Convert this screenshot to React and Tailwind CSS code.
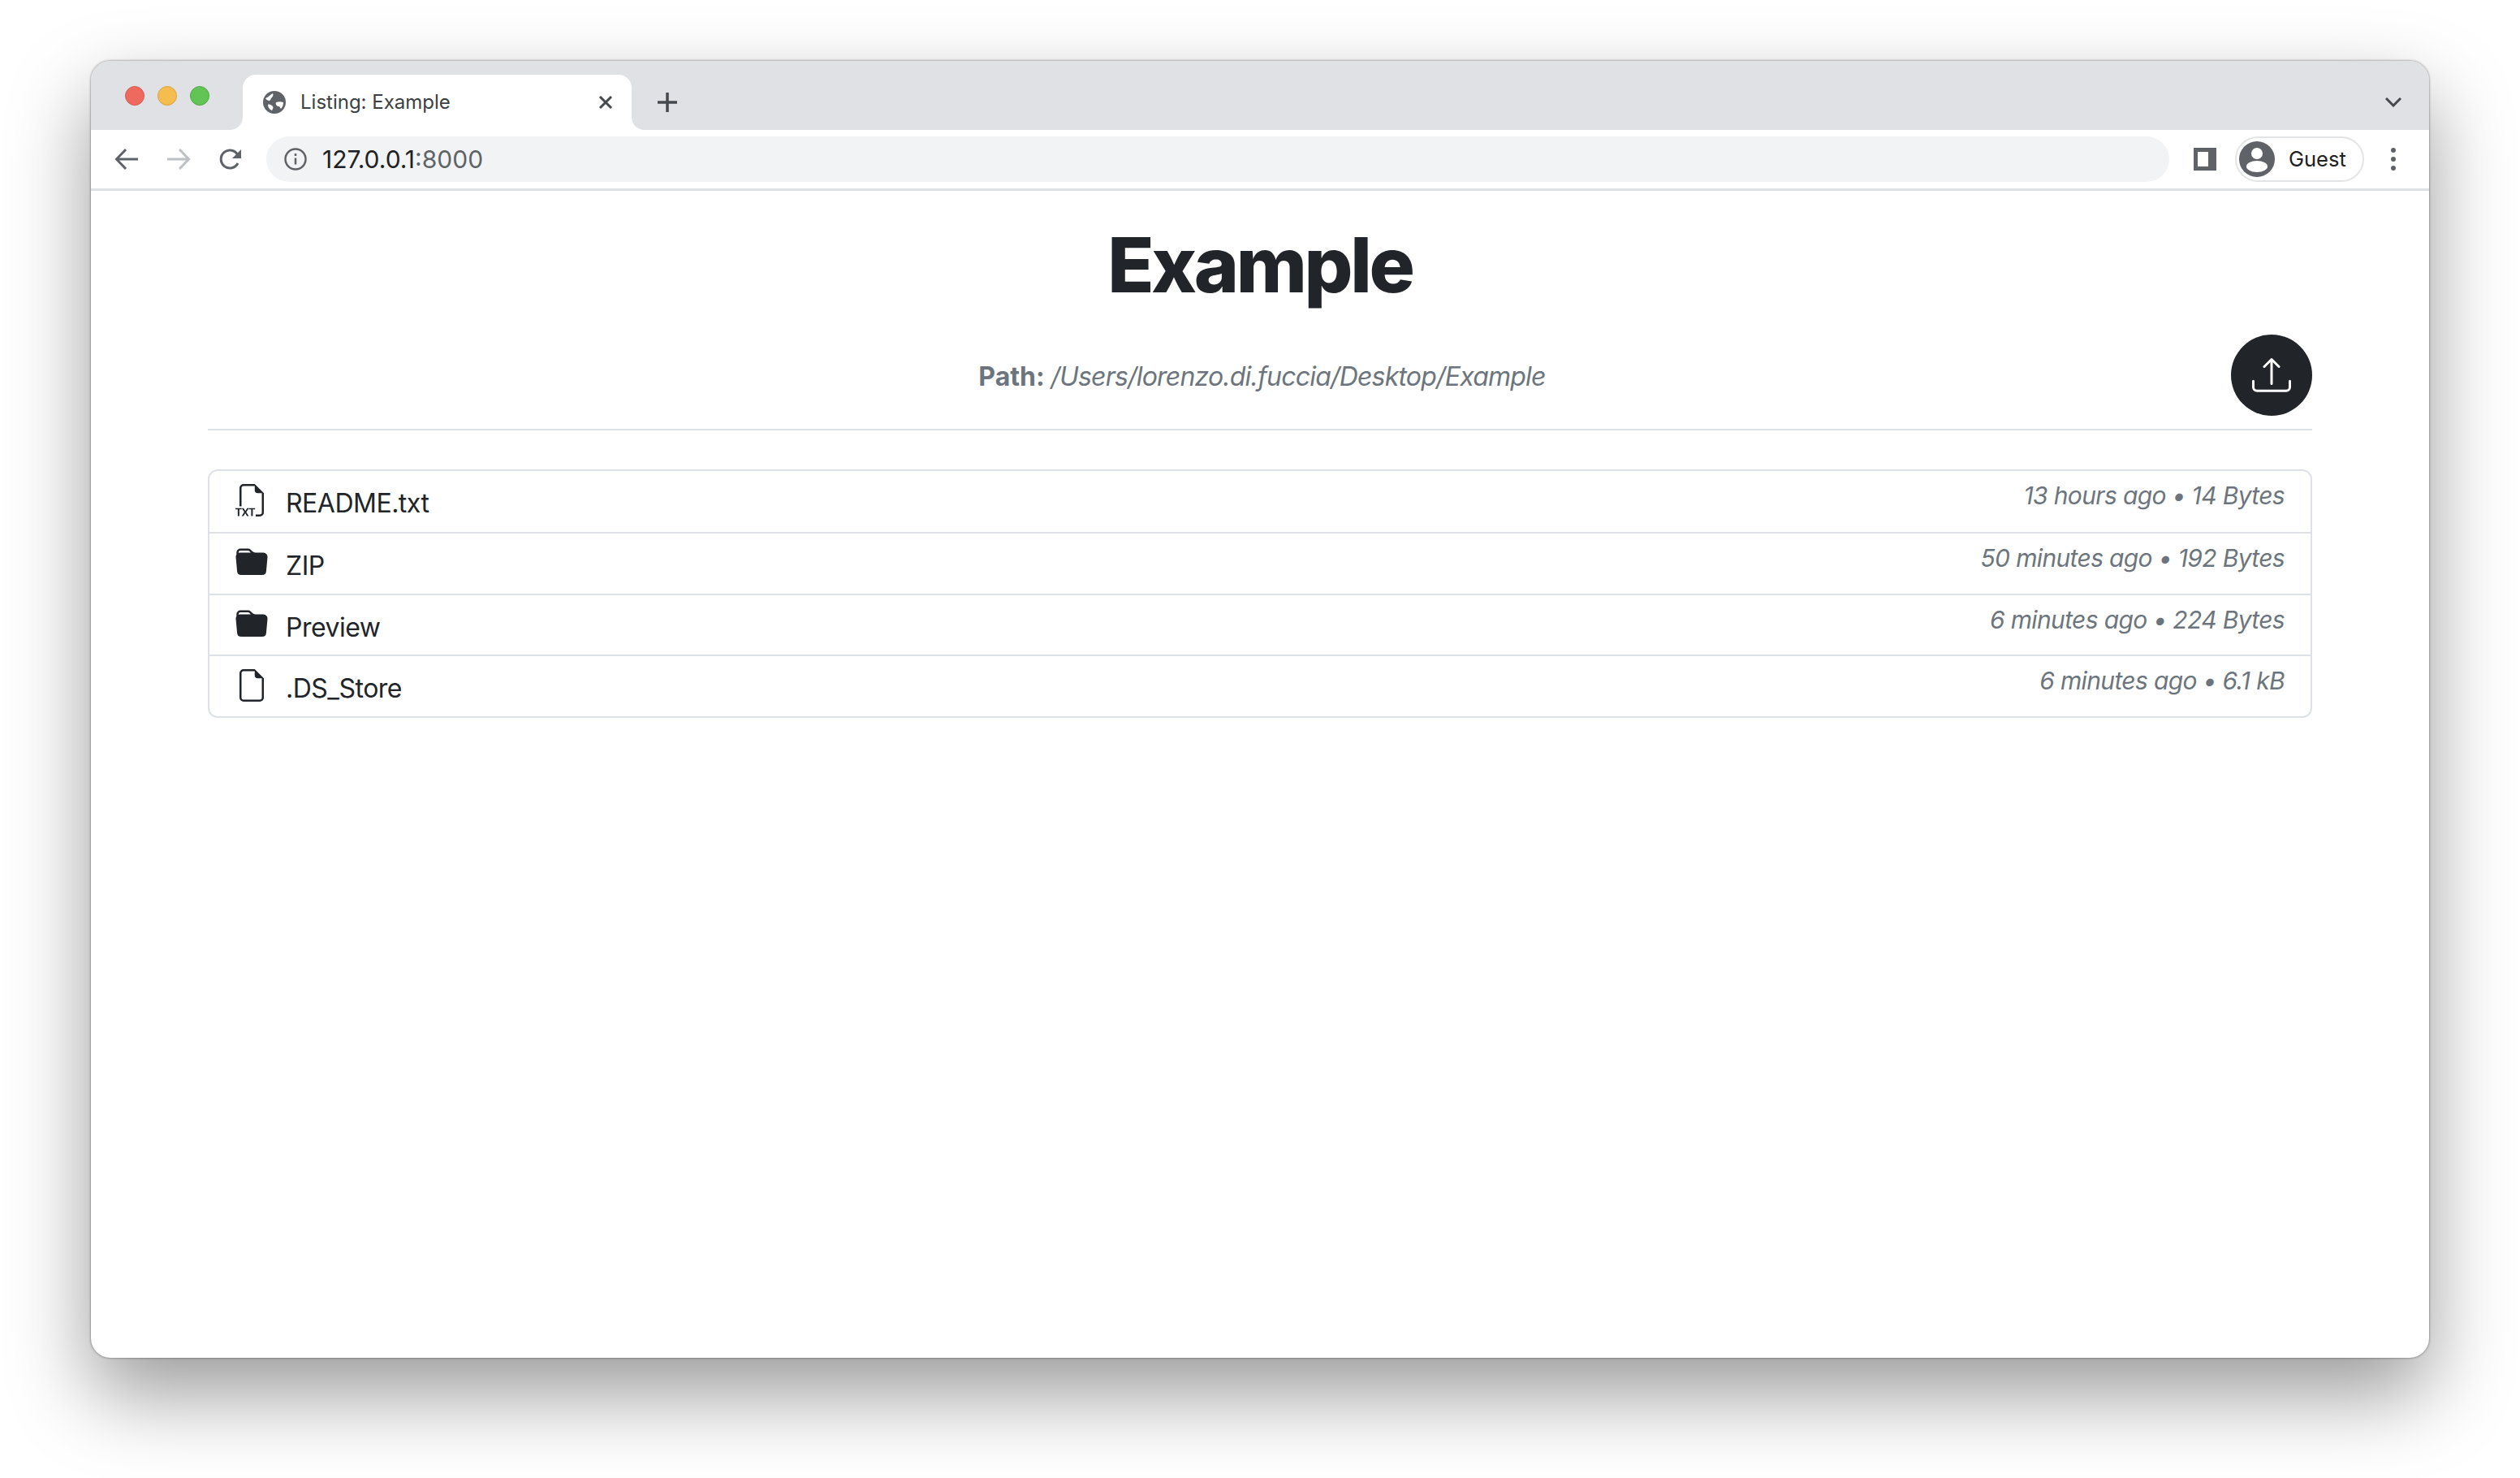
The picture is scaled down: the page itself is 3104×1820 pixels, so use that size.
import { BsFiletypeTxt, BsFolderFill, BsFileEarmark, BsUpload } from 'react-icons/bs'

const rows = [
  { name: 'README.txt', Icon: BsFiletypeTxt, meta: '13 hours ago • 14 Bytes' },
  { name: 'ZIP', Icon: BsFolderFill, meta: '50 minutes ago • 192 Bytes' },
  { name: 'Preview', Icon: BsFolderFill, meta: '6 minutes ago • 224 Bytes' },
  { name: '.DS_Store', Icon: BsFileEarmark, meta: '6 minutes ago • 6.1 kB' },
]

function Globe() {
  return (
    <svg width="28" height="28" viewBox="0 0 28 28">
      <circle cx="14" cy="14" r="14" fill="#5f6368" />
      <path d="M3 9c3-1 5-4 9-6 1 2 0 4-1 5-2 1-1 3-3 4-2 0-4-1-5-3z" fill="#fff" />
      <path d="M16 14c3-1 6-1 9 0 0 3-1 6-3 8-1-1-1-3-3-3-2 0-4-3-3-5z" fill="#fff" />
      <path d="M6 17c2-1 4 0 6 2 1 1 0 3-1 5-3-1-5-4-5-7z" fill="#fff" />
    </svg>
  )
}

function ToolbarIcons() {
  return (
    <div className="flex items-center w-[190px] pl-[29px] gap-[34px] shrink-0">
      <svg width="30" height="28" viewBox="0 0 30 28" fill="none" stroke="#5f6368" strokeWidth="3">
        <path d="M29 14H3M14 2 2.5 14 14 26" />
      </svg>
      <svg width="30" height="28" viewBox="0 0 30 28" fill="none" stroke="#bdc1c6" strokeWidth="3">
        <path d="M1 14h26M16 2l11.5 12L16 26" />
      </svg>
      <svg className="ml-[1px]" width="28" height="28" viewBox="0 0 28 28" fill="none">
        <path d="M23 19a11 11 0 1 1 0-10" stroke="#5f6368" strokeWidth="3" />
        <path d="M27 2v11H16z" fill="#5f6368" />
      </svg>
    </div>
  )
}

export default function App() {
  return (
    <div className="w-[3104px] h-[1820px] bg-white overflow-hidden px-[112px] pt-[75px] font-['Inter',sans-serif]">
      <div className="h-[1597px] rounded-[24px] bg-white overflow-hidden shadow-[0_44px_100px_0_rgba(0,0,0,0.4),0_0_3px_rgba(0,0,0,0.55)]">
        {/* Tab strip */}
        <div className="h-[85px] bg-[#dfe1e5] flex items-end">
          <div className="w-[187px] h-full shrink-0 flex items-center gap-4 pl-[42px]">
            <div className="w-6 h-6 rounded-full bg-[#ee6a5f] border border-[#d9574d]" />
            <div className="w-6 h-6 rounded-full bg-[#f5bd4f] border border-[#d9a23c]" />
            <div className="w-6 h-6 rounded-full bg-[#61c454] border border-[#52a943]" />
          </div>
          <div className="relative w-[479px] h-[68px] shrink-0 bg-white rounded-t-[16px] flex items-center pl-[25px] pr-[23px]">
            <svg className="absolute left-[-16px] bottom-0" width="16" height="16" viewBox="0 0 16 16">
              <path d="M16 0v16H0c9 0 16-7 16-16z" fill="#fff" />
            </svg>
            <svg className="absolute right-[-16px] bottom-0" width="16" height="16" viewBox="0 0 16 16">
              <path d="M0 0v16h16C7 16 0 9 0 0z" fill="#fff" />
            </svg>
            <Globe />
            <span className="ml-[18px] text-[24px] leading-none text-[#3c4043] grow">Listing: Example</span>
            <svg width="18" height="18" viewBox="0 0 18 18" stroke="#45484c" strokeWidth="3" fill="none">
              <path d="M2 2l14 14M16 2 2 16" />
            </svg>
          </div>
          <div className="h-[68px] flex items-center pl-[32px] grow">
            <svg width="24" height="24" viewBox="0 0 24 24" stroke="#45484c" strokeWidth="3.5" fill="none">
              <path d="M12 0v24M0 12h24" />
            </svg>
          </div>
          <div className="h-[68px] flex items-center pr-[34px]">
            <svg width="20" height="12" viewBox="0 0 20 12" stroke="#45484c" strokeWidth="3" fill="none">
              <path d="M1 1l9 9 9-9" />
            </svg>
          </div>
        </div>

        {/* Toolbar */}
        <div className="h-[75px] bg-white border-b-[3px] border-[#dfe1e5] flex items-center pb-[1px]">
          <ToolbarIcons />
          <div className="ml-[26px] w-[2344px] h-[56px] rounded-full bg-[#f1f3f4] flex items-center pl-[22px] shrink-0">
            <svg width="28" height="28" viewBox="0 0 28 28" fill="none">
              <circle cx="14" cy="14" r="12.5" stroke="#5f6368" strokeWidth="2.5" />
              <path d="M14 12.5v8M14 7v3" stroke="#5f6368" strokeWidth="2.5" />
            </svg>
            <span className="ml-[19px] text-[30px] leading-none text-[#202124]">127.0.0.1<span className="text-[#5f6368]">:8000</span></span>
          </div>
          <div className="ml-[30px] w-[28px] h-[28px] bg-[#5f6368] shrink-0 flex items-center pl-[5px]">
            <div className="w-[13px] h-[18px] bg-white" />
          </div>
          <div className="ml-[23px] w-[159px] h-[56px] rounded-full border-2 border-[#e3e4e6] flex items-center pl-[3px] shrink-0">
            <svg width="44" height="44" viewBox="0 0 44 44">
              <circle cx="22" cy="22" r="22" fill="#5f6368" />
              <circle cx="22" cy="15" r="7" fill="#fff" />
              <ellipse cx="22" cy="31" rx="13" ry="7" fill="#fff" />
            </svg>
            <span className="ml-[17px] text-[25.5px] leading-none text-[#202124]">Guest</span>
          </div>
          <div className="ml-[33px] flex flex-col gap-[5px]">
            <div className="w-[6px] h-[6px] rounded-full bg-[#5f6368]" />
            <div className="w-[6px] h-[6px] rounded-full bg-[#5f6368]" />
            <div className="w-[6px] h-[6px] rounded-full bg-[#5f6368]" />
          </div>
        </div>

        {/* Page */}
        <div className="px-[144px]">
          <h1 className="h-[110px] pt-[44px] text-center text-[94px] leading-[1] font-extrabold tracking-[-0.035em] text-[#212529]">Example</h1>
          <div className="mt-[67px] pb-[16px] border-b-2 border-[#dee2e6] flex items-center">
            <div className="w-[100px]" />
            <p className="grow text-center pl-[5px] mt-[4px] text-[32px] leading-[48px] text-[#6c757d]">
              <span className="font-bold">Path: </span><em className="tracking-[-0.8px]">/Users/lorenzo.di.fuccia/Desktop/Example</em>
            </p>
            <button className="w-[100px] h-[100px] rounded-full bg-[#212529] text-white flex items-center justify-center">
              <BsUpload size={48} />
            </button>
          </div>

          <ul className="mt-[48px] border-2 border-[#dee2e6] rounded-[12px]">
            {rows.map((r, i) => (
              <li key={r.name} className={`h-[75.4px] flex justify-between pl-[32px] pr-[32px] ${i ? 'border-t-2 border-[#dee2e6]' : ''}`}>
                <div className="flex items-start pt-[16px]">
                  <r.Icon size={40} className="text-[#212529]" />
                  <span className="ml-[22px] text-[32px] leading-[48px] tracking-[-0.5px] text-[#212529]">{r.name}</span>
                </div>
                <span className="pt-[8px] text-[30px] leading-[45px] italic tracking-[-0.65px] text-[#6c757d]">{r.meta}</span>
              </li>
            ))}
          </ul>
        </div>
      </div>
    </div>
  )
}
